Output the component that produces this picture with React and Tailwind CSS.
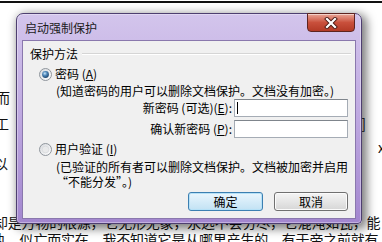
import React from "react";

function Radio({ checked }) {
  return (
    <svg width="13" height="13" viewBox="0 0 13 13" className="shrink-0">
      <defs>
        <linearGradient id={checked ? "rb1" : "rb2"} x1="0" y1="0" x2="1" y2="1">
          <stop offset="0" stopColor="#d6d9dd" />
          <stop offset="1" stopColor="#ffffff" />
        </linearGradient>
        <radialGradient id="dot" cx="0.4" cy="0.35" r="0.7">
          <stop offset="0" stopColor="#c8e6fa" />
          <stop offset="0.45" stopColor="#4d86b8" />
          <stop offset="1" stopColor="#173d66" />
        </radialGradient>
      </defs>
      <circle cx="6.5" cy="6.5" r="6" fill={`url(#${checked ? "rb1" : "rb2"})`} stroke="#8f959c" strokeWidth="1" />
      {checked ? (
        <circle cx="6.5" cy="6.5" r="3.4" fill="url(#dot)" />
      ) : (
        <circle cx="6.5" cy="6.5" r="3.4" fill="#e9eaeb" stroke="#d2d4d6" strokeWidth="0.6" />
      )}
    </svg>
  );
}

function U({ c }) {
  return (
    <>
      (<span className="underline">{c}</span>)
    </>
  );
}

export default function App() {
  return (
    <div
      className="relative w-[382px] h-[242px] overflow-hidden bg-white text-black"
      style={{ fontFamily: '"Noto Sans CJK SC", "Liberation Sans", sans-serif' }}
    >
      {/* document behind */}
      <div className="h-[1px]" />
      <div className="h-[2px] bg-[#111]" />
      <div className="text-[14px] leading-[16px] text-[#111]">
        <div className="mt-[86px] h-[16px] flex justify-between">
          <span className="-ml-[4px]">而</span>
          <span className="mr-[16px]">丨</span>
        </div>
        <div className="mt-[10px] h-[16px] flex justify-between">
          <span className="-ml-[5px]">工</span>
          <span className="mr-[16px]">]</span>
        </div>
        <div className="mt-[8px] h-[16px] flex justify-end">
          <span className="-mr-[3px]">x</span>
        </div>
        <div className="mt-[0px] h-[16px] flex justify-between">
          <span className="-ml-[6px]">以</span>
          <span></span>
        </div>
        <div className="mt-[43px] h-[16px] whitespace-nowrap -ml-[6px] tracking-[-0.2px]">
          却是万物的根源，它无形无象，永远不会穷尽，它混沌如瓦，能
        </div>
        <div className="mt-[1px] h-[16px] whitespace-nowrap -ml-[8px] tracking-[-0.2px]">
          执，似亡而实在，我不知道它是从哪里产生的，有于帝之前就有
        </div>
      </div>

      {/* dialog window */}
      <div className="absolute left-[16px] top-[13px] w-[346px] h-[211px] rounded-t-[7px] rounded-b-[4px] border border-[#4e3f70] bg-gradient-to-b from-[#d3c5ec] via-[#bea8e0] to-[#a387cf] shadow-[3px_3px_10px_2px_rgba(0,0,0,0.5),inset_0_0_0_1px_rgba(255,255,255,0.35)] flex flex-col text-[12px] leading-[14px]">
        <div className="h-[26px] flex items-start justify-between pl-[8px] pr-[6px]">
          <div className="mt-[7px] text-[#1b1b1b]">启动强制保护</div>
          <div className="-mt-[1px] w-[48px] h-[19px] rounded-b-[4px] border border-[#5e2420] bg-gradient-to-b from-[#e9a597] via-[#c9503c] to-[#b33a26] flex items-center justify-center shadow-[inset_0_1px_0_rgba(255,255,255,0.5)]">
            <svg width="14" height="12" viewBox="0 0 14 12">
              <path d="M3 2 L11 10 M11 2 L3 10" stroke="#4a1a14" strokeWidth="4" strokeLinecap="square" />
              <path d="M3 2 L11 10 M11 2 L3 10" stroke="#ffffff" strokeWidth="2.2" strokeLinecap="square" />
            </svg>
          </div>
        </div>
        <div className="mx-[5px] h-[179px] bg-[#f0f0f0] border border-[#8a78ad] flex flex-col">
          <div className="pt-[6px] pl-[7px] pr-[4px] h-[20px] flex items-center">
            <span>保护方法</span>
            <div className="ml-[4px] flex-1 h-[2px] border-t border-[#d5d5d5] border-b border-b-white" />
          </div>
          <div className="mt-[6px] h-[14px] flex items-center pl-[16px]">
            <Radio checked />
            <span className="ml-[3px]">
              密码 <U c="A" />
            </span>
          </div>
          <div className="mt-[3px] h-[14px] pl-[33px] whitespace-nowrap">
            (知道密码的用户可以删除文档保护。文档没有加密。)
          </div>
          <div className="mt-[1px] h-[18px] flex items-center">
            <div className="w-[209px] text-right whitespace-nowrap">
              新密码 (可选)<U c="E" />:
            </div>
            <div className="ml-[2px] w-[114px] h-[18px] bg-white border border-[#a5acb5] border-t-[#7f858c] relative">
              <div className="absolute left-[2px] top-[2px] w-px h-[12px] bg-black" />
            </div>
          </div>
          <div className="mt-[3px] h-[18px] flex items-center">
            <div className="w-[209px] text-right whitespace-nowrap">
              确认新密码 <U c="P" />:
            </div>
            <div className="ml-[2px] w-[114px] h-[18px] bg-white border border-[#a5acb5] border-t-[#7f858c]" />
          </div>
          <div className="mt-[4px] h-[14px] flex items-center pl-[16px]">
            <Radio checked={false} />
            <span className="ml-[3px]">
              用户验证 <U c="I" />
            </span>
          </div>
          <div className="mt-[3px] pl-[33px] leading-[15px] whitespace-nowrap">
            <div>(已验证的所有者可以删除文档保护。文档被加密并启用</div>
            <div>“不能分发”。)</div>
          </div>
          <div className="mt-[3px] flex justify-end gap-[11px] pr-[7px]">
            <div className="w-[75px] h-[19px] rounded-[3px] border border-[#3c7fb1] bg-gradient-to-b from-[#eaf6fd] to-[#c2e2f4] shadow-[inset_0_0_0_1px_#b6e1f7] flex items-center justify-center">
              确定
            </div>
            <div className="w-[74px] h-[19px] rounded-[3px] border border-[#707070] bg-gradient-to-b from-[#f4f4f4] via-[#e6e6e6] to-[#d6d6d6] shadow-[inset_0_0_0_1px_#fbfbfb] flex items-center justify-center">
              取消
            </div>
          </div>
        </div>
      </div>
    </div>
  );
}
